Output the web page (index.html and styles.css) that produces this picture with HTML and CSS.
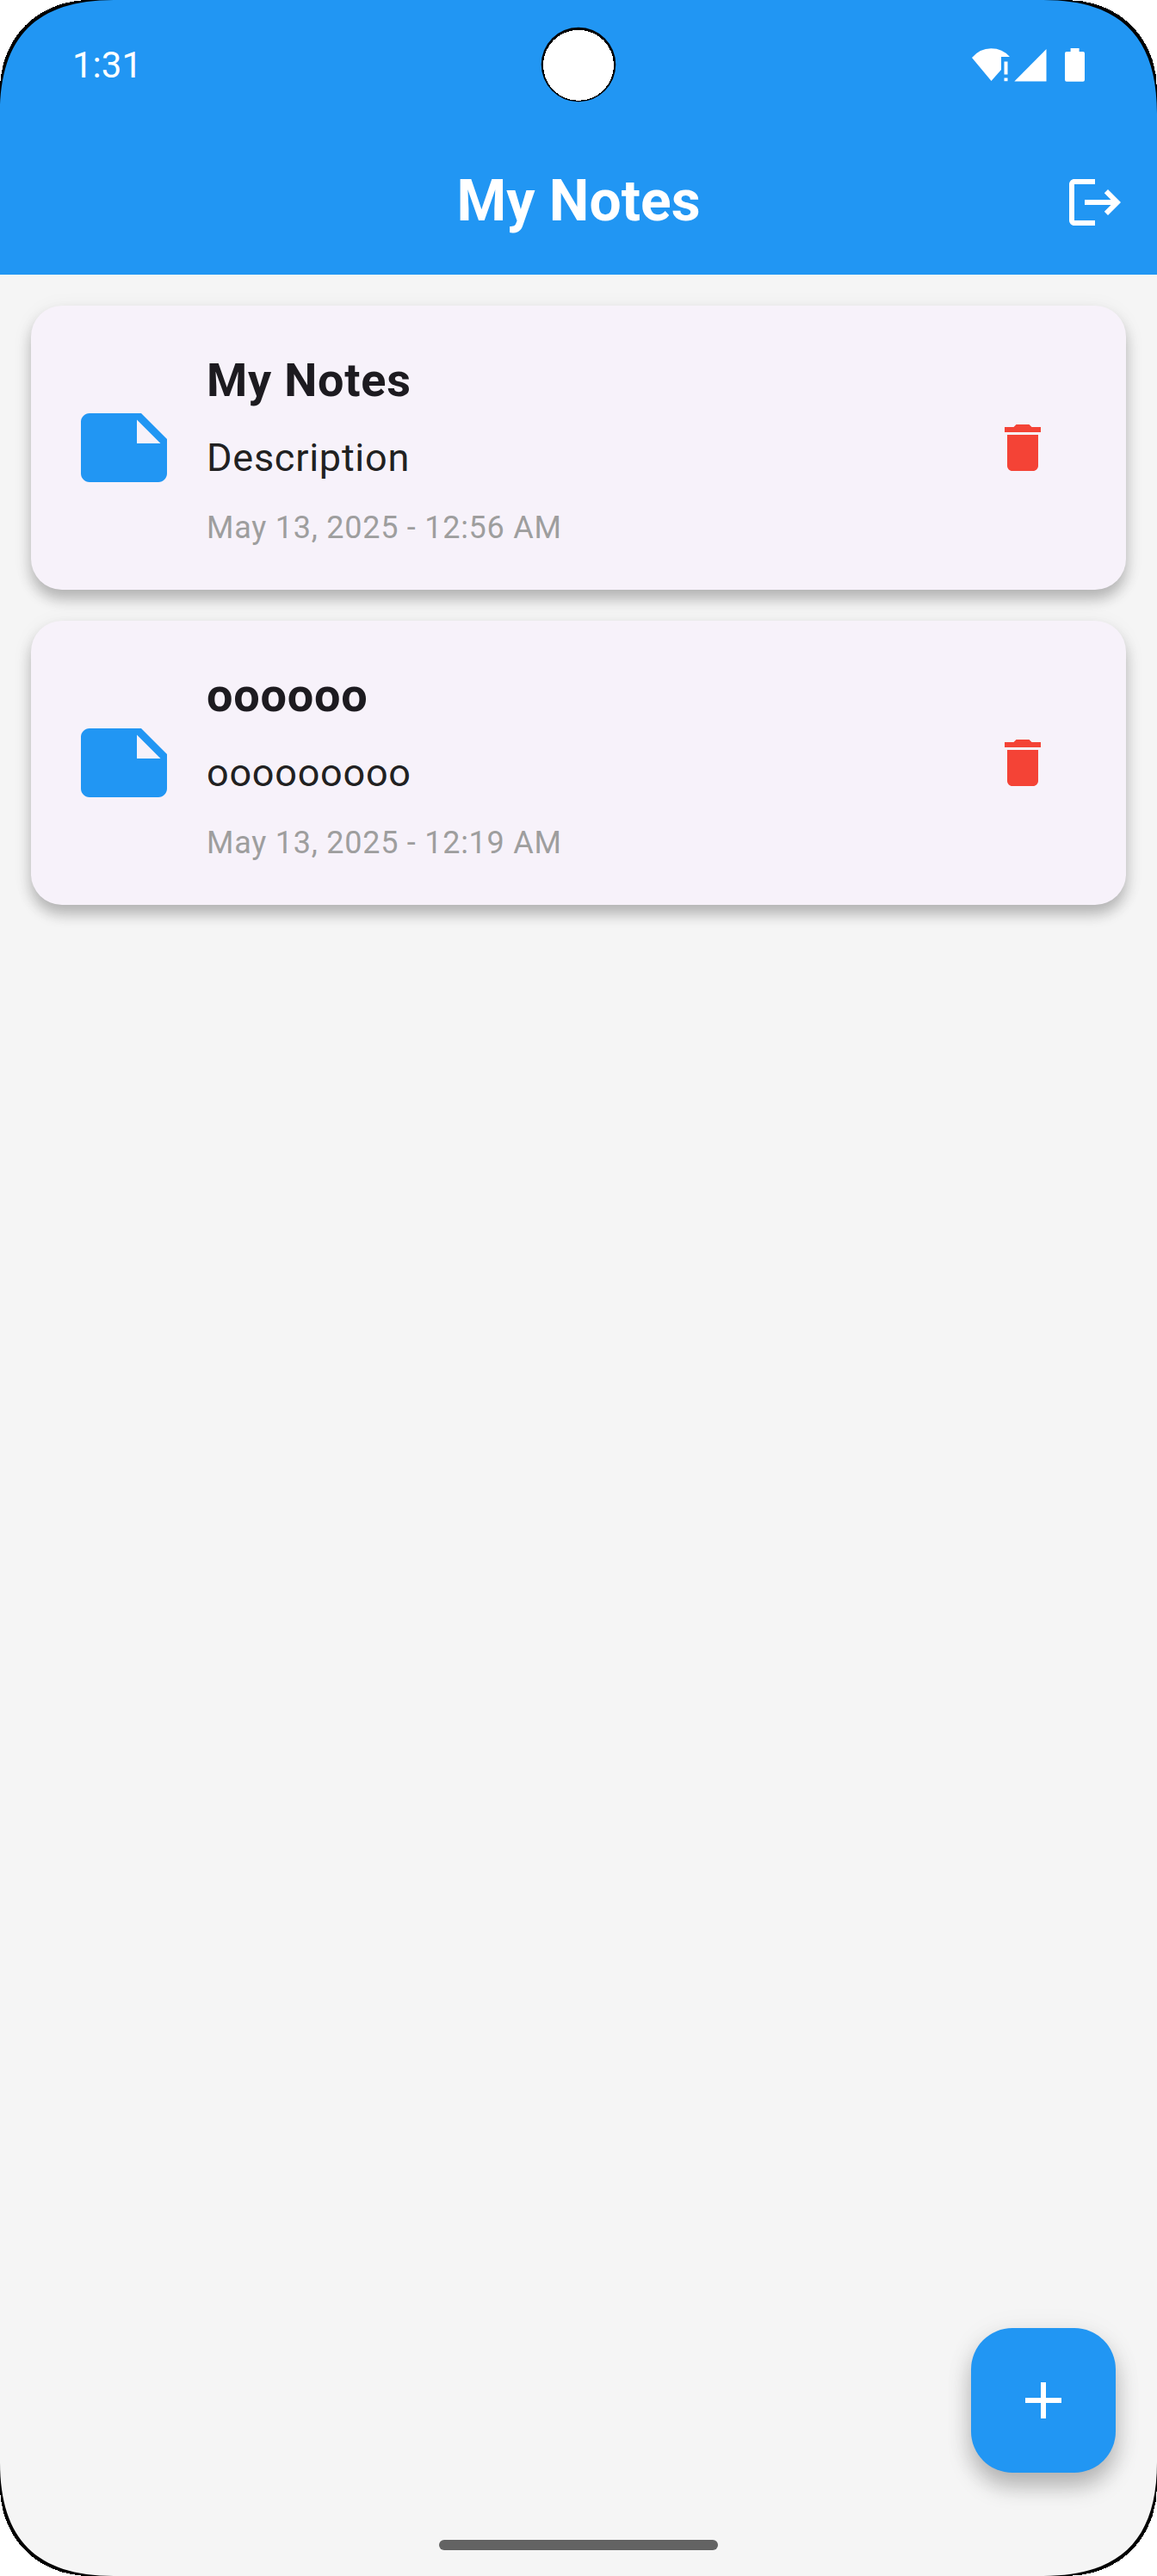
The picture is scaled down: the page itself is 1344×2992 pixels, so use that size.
FILE: index.html
```html
<!DOCTYPE html>
<html lang="en">
<head>
<meta charset="utf-8">
<title>My Notes</title>
<link rel="stylesheet" href="styles.css">
</head>
<body>
<div class="screen">
  <header class="top">
    <div class="status">
      <span class="clock">1:31</span>
      <svg class="indicators" viewBox="0 0 134 42" fill="#fff">
        <path d="M1 12Q10 1.200 23.300 1.200T45 11H35V26L23.500 39Z"/>
        <path d="M38.500 16.500h4v15h-4zM38.500 35.500h4v3.700h-4z"/>
        <path d="M50.300 39.500L87.500 2V39.500Z"/>
        <path d="M115.600 1h10v4h4.400q2 0 2 2V37.800q0 2-2 2H111q-2 0-2-2V7q0-2 2-2h4.600z"/>
      </svg>
    </div>
    <div class="appbar">
      <h1 class="heading">My Notes</h1>
      <svg class="logout" viewBox="0 0 24 24" fill="#fff"><path d="M17 7l-1.410 1.410L18.170 11H8v2h10.170l-2.580 2.580L17 17l5-5zM4 5h8V3H4c-1.100 0-2 .9-2 2v14c0 1.100.9 2 2 2h8v-2H4V5z"/></svg>
    </div>
  </header>
  <main class="notes">
    <article class="card">
      <svg class="note-icon" viewBox="0 0 24 24"><path d="M22 10l-6-6H4c-1.100 0-2 .9-2 2v12.010c0 1.100.9 1.990 2 1.990l16-.01c1.100 0 2-.89 2-1.990v-8zm-7-4.500l5.500 5.500H15V5.500z"/></svg>
      <div class="text">
        <h2 class="title">My Notes</h2>
        <p class="desc">Description</p>
        <p class="date">May 13, 2025 - 12:56 AM</p>
      </div>
      <svg class="delete" viewBox="0 0 24 24"><path d="M6 19c0 1.100.9 2 2 2h8c1.100 0 2-.9 2-2V7H6v12zM19 4h-3.500l-1-1h-5l-1 1H5v2h14V4z"/></svg>
    </article>
    <article class="card">
      <svg class="note-icon" viewBox="0 0 24 24"><path d="M22 10l-6-6H4c-1.100 0-2 .9-2 2v12.010c0 1.100.9 1.990 2 1.990l16-.01c1.100 0 2-.89 2-1.990v-8zm-7-4.500l5.500 5.500H15V5.500z"/></svg>
      <div class="text">
        <h2 class="title">oooooo</h2>
        <p class="desc">ooooooooo</p>
        <p class="date">May 13, 2025 - 12:19 AM</p>
      </div>
      <svg class="delete" viewBox="0 0 24 24"><path d="M6 19c0 1.100.9 2 2 2h8c1.100 0 2-.9 2-2V7H6v12zM19 4h-3.500l-1-1h-5l-1 1H5v2h14V4z"/></svg>
    </article>
  </main>
  <div class="home-bar"></div>
  <button class="fab" aria-label="Add note"><svg viewBox="0 0 24 24" fill="#fff"><path d="M19 13h-6v6h-2v-6H5v-2h6V5h2v6h6v2z"/></svg></button>
  <svg class="camera" viewBox="0 0 88 88"><circle cx="44" cy="44" r="43.300"/><circle class="cutout" cx="44" cy="44.800" r="41"/></svg>
  <svg class="corner tl" viewBox="0 0 135 135"><path d="M0 0H132C42.700 0 0 42.700 0 132Z"/><path class="cutout" d="M0 0H105C43.700 0 0 43.700 0 105Z"/></svg>
  <svg class="corner tr" viewBox="0 0 135 135"><path d="M0 0H132C42.700 0 0 42.700 0 132Z"/><path class="cutout" d="M0 0H105C43.700 0 0 43.700 0 105Z"/></svg>
  <svg class="corner bl" viewBox="0 0 135 135"><path d="M0 0H132C42.700 0 0 42.700 0 132Z"/><path class="cutout" d="M0 0H105C43.700 0 0 43.700 0 105Z"/></svg>
  <svg class="corner br" viewBox="0 0 135 135"><path d="M0 0H132C42.700 0 0 42.700 0 132Z"/><path class="cutout" d="M0 0H105C43.700 0 0 43.700 0 105Z"/></svg>
</div>
</body>
</html>
```
FILE: styles.css
```css
* { box-sizing: border-box; margin: 0; padding: 0; }
body { font-family: Roboto, sans-serif; background: #fff; }
svg { display: block; flex: none; }
.screen {
  position: relative;
  width: 1344px;
  height: 2992px;
  display: flex;
  flex-direction: column;
  background: #f5f5f5;
  overflow: hidden;
}
.top { height: 319px; background: #2196f3; color: #fff; }
.status {
  height: 151px;
  padding: 0 82px 0 84px;
  display: flex;
  justify-content: space-between;
  align-items: center;
}
.clock { font-size: 42px; line-height: 50px; }
.indicators { width: 134px; height: 42px; }
.appbar {
  height: 168px;
  padding: 0 36px 0 108px;
  display: flex;
  align-items: center;
}
.heading { flex: 1; padding-bottom: 2px; text-align: center; font-size: 66px; line-height: 84px; font-weight: 700; }
.logout { width: 72px; height: 72px; }
.notes { flex: 1; padding: 36px; display: flex; flex-direction: column; gap: 36px; }
.card {
  height: 330px;
  padding: 48px 84px 48px 48px;
  display: flex;
  align-items: center;
  gap: 36px;
  border-radius: 36px;
  background: #f7f2fa;
  box-shadow: 0 11px 16px rgba(0, 0, 0, .24), 0 4px 26px rgba(0, 0, 0, .06);
}
.note-icon { width: 120px; height: 120px; fill: #2196f3; }
.text { flex: 1; height: 234px; }
.title { font-size: 54px; line-height: 77px; font-weight: 700; letter-spacing: .75px; color: #1d1b20; }
.desc { margin-top: 20px; font-size: 45px; line-height: 64px; letter-spacing: .75px; color: #212121; }
.date { margin-top: 24px; font-size: 36px; line-height: 51px; letter-spacing: .75px; color: #9e9e9e; }
.delete { width: 72px; height: 72px; fill: #f44336; }
.home-bar { align-self: center; width: 324px; height: 12px; margin-bottom: 30px; border-radius: 6px; background: #636363; }
.fab {
  position: absolute;
  right: 48px;
  bottom: 120px;
  width: 168px;
  height: 168px;
  display: grid;
  place-items: center;
  border: 0;
  border-radius: 48px;
  background: #2196f3;
  box-shadow: 0 16px 26px rgba(0, 0, 0, .25), 0 4px 36px rgba(0, 0, 0, .06);
}
.fab svg { width: 72px; height: 72px; }
.camera { position: absolute; left: 628px; top: 31px; width: 88px; height: 88px; }
.cutout { fill: #fff; shape-rendering: crispEdges; }
.corner { position: absolute; width: 135px; height: 135px; }
.tl { left: 0; top: 0; }
.tr { right: 0; top: 0; transform: scaleX(-1); }
.bl { left: 0; bottom: 0; transform: scaleY(-1); }
.br { right: 0; bottom: 0; transform: scale(-1); }
```
